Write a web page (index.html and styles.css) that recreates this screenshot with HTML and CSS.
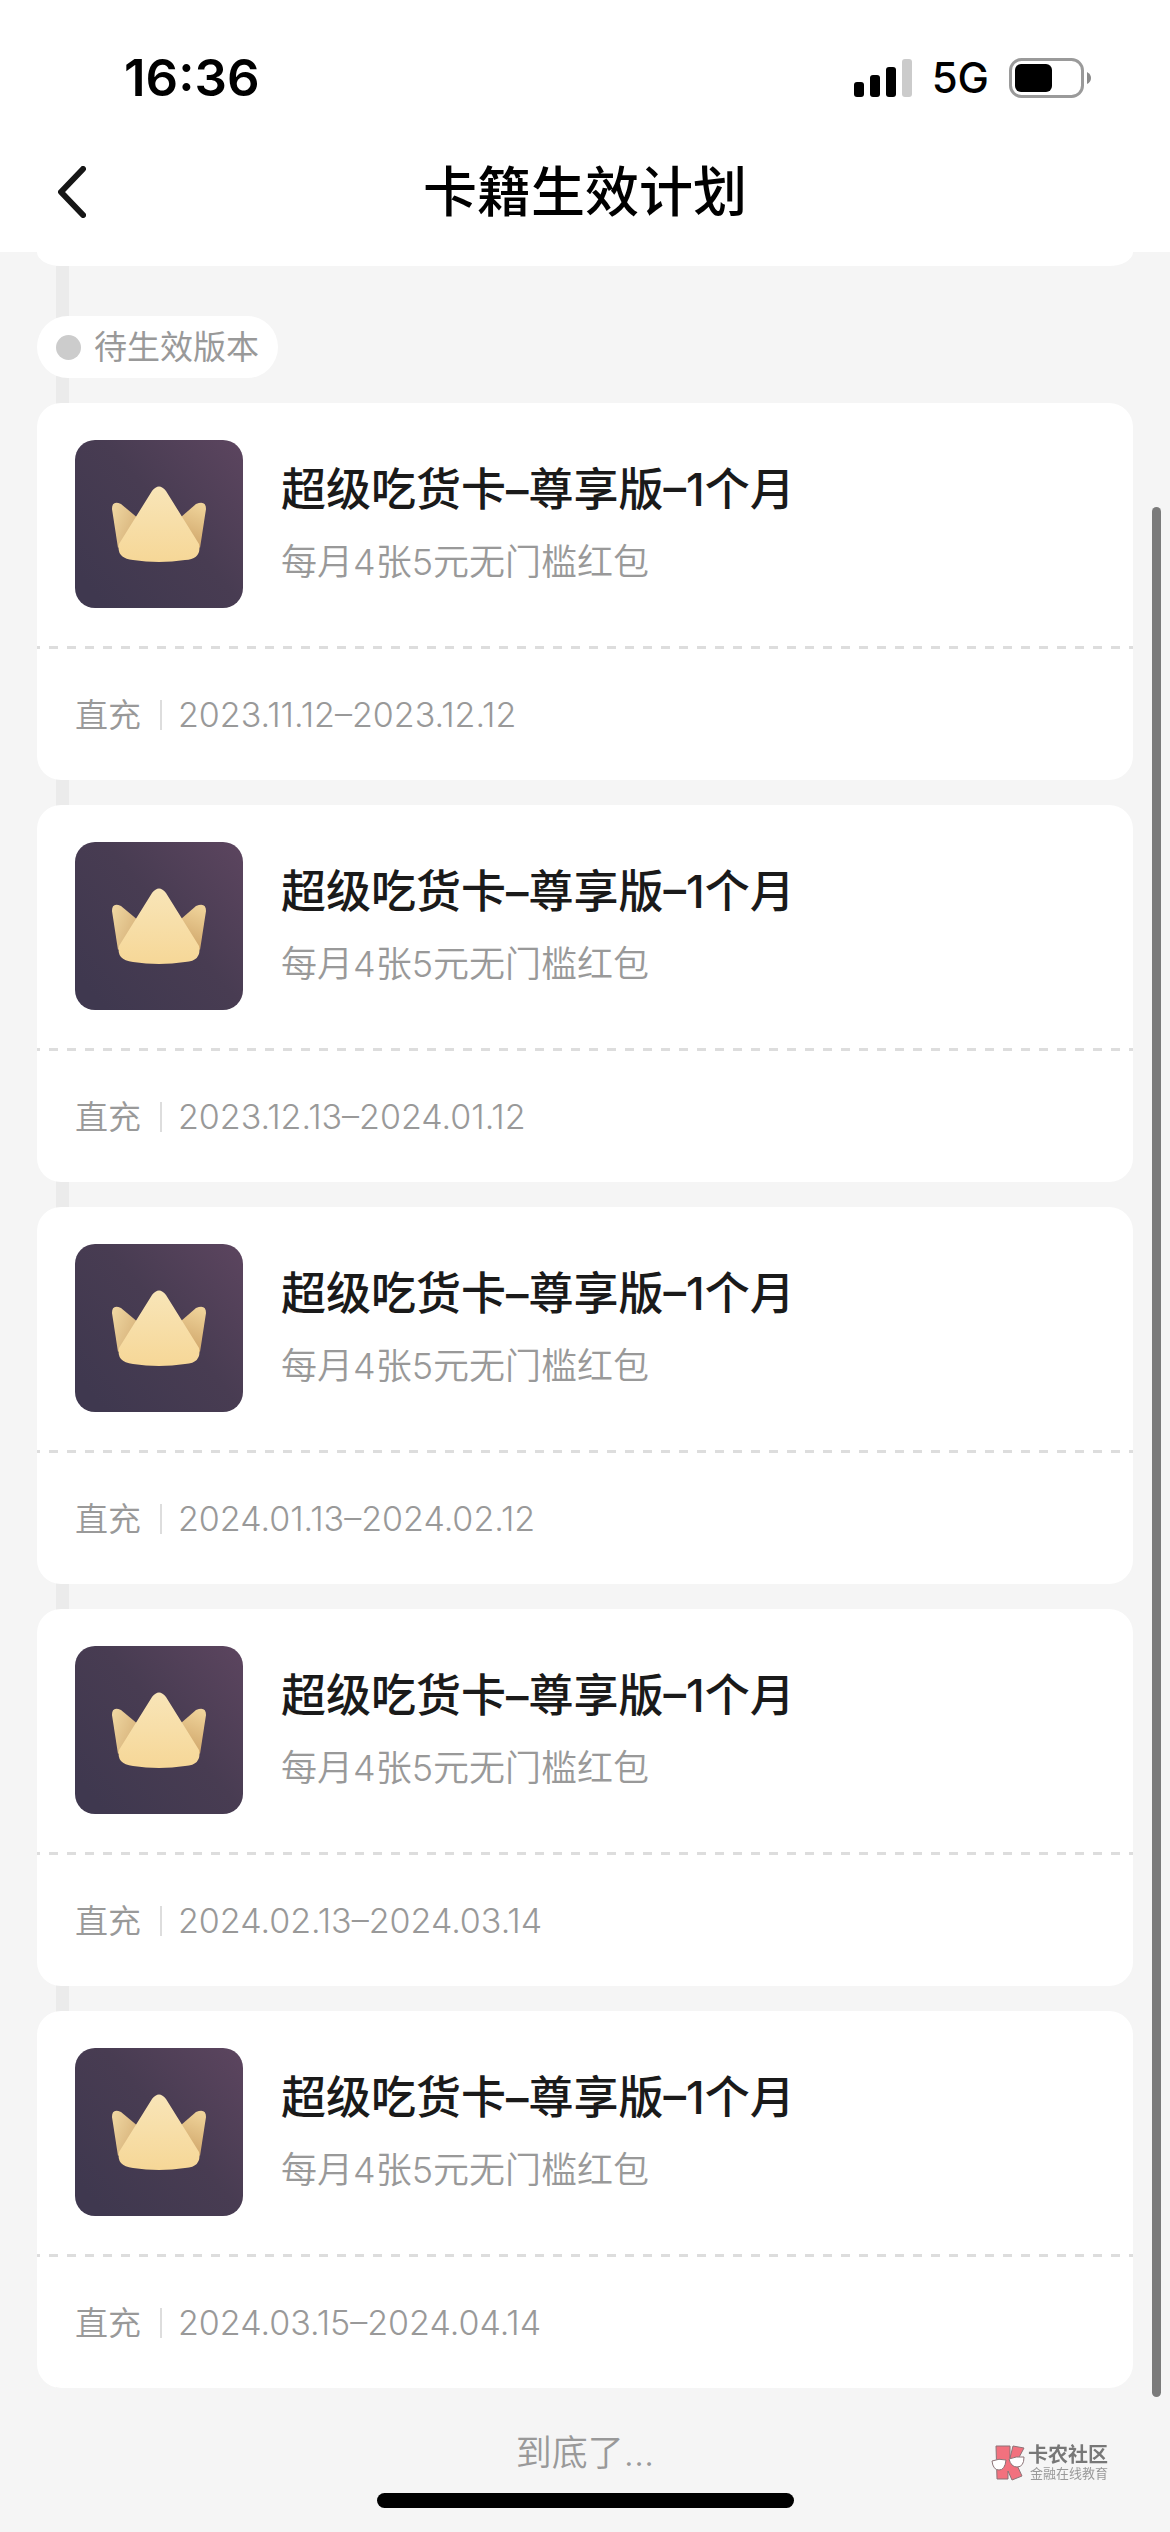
FILE: index.html
```html
<!DOCTYPE html>
<html lang="zh-CN">
<head>
<meta charset="utf-8">
<meta name="viewport" content="width=device-width, initial-scale=1">
<title>卡籍生效计划</title>
<link rel="stylesheet" href="styles.css">
</head>
<body>
<svg class="defs" width="0" height="0" aria-hidden="true">
  <defs>
    <linearGradient id="gold" x1="0" y1="0" x2="0" y2="1">
      <stop offset="0" stop-color="#f8e5b8"/>
      <stop offset="1" stop-color="#f6d797"/>
    </linearGradient>
    <linearGradient id="goldLeft" x1="0" y1="0" x2="1" y2="0.6">
      <stop offset="0" stop-color="#f1d9a4"/>
      <stop offset="1" stop-color="#d2ab72"/>
    </linearGradient>
    <linearGradient id="goldRight" x1="0.7" y1="0" x2="0.4" y2="1">
      <stop offset="0" stop-color="#efd39a"/>
      <stop offset="1" stop-color="#cda266"/>
    </linearGradient>
    <symbol id="crown" viewBox="0 0 168 168">
      <path d="M37 69 Q37 60 46 64 L70 84 L43 108 Z" fill="url(#goldLeft)"/>
      <path d="M131 69 Q131 60 121 64 L98 84 L125 108 Z" fill="url(#goldRight)"/>
      <path d="M77 51 Q84 42 91 51 L124 104 Q127 119 110 120 Q84 124 58 120 Q41 118 44 104 Z" fill="url(#gold)"/>
    </symbol>
  </defs>
</svg>

<header class="header">
  <div class="status">
    <span class="status-time">16:36</span>
    <div class="status-icons">
      <svg class="signal" viewBox="0 0 58 38" aria-hidden="true">
        <rect x="0" y="23" width="10" height="15" rx="3"/>
        <rect x="16" y="16" width="10" height="22" rx="3"/>
        <rect x="32" y="8" width="10" height="30" rx="3"/>
        <rect x="48" y="0" width="10" height="38" rx="3" fill="#cbcbcb"/>
      </svg>
      <span class="network">5G</span>
      <svg class="battery" viewBox="0 0 82 40" aria-hidden="true">
        <rect x="1.5" y="1.5" width="72" height="37" rx="11" fill="none" stroke="#9a9a9a" stroke-width="3"/>
        <rect x="6" y="6" width="37" height="28" rx="6"/>
        <path d="M78 14 Q82 16 82 20 Q82 24 78 26 Z" fill="#8a8a8a"/>
      </svg>
    </div>
  </div>
  <nav class="navbar">
    <button class="back" type="button" aria-label="返回">
      <svg viewBox="0 0 28 52" aria-hidden="true"><path d="M25 3 L3 26 L25 49" fill="none" stroke="#161616" stroke-width="6" stroke-linecap="round" stroke-linejoin="round"/></svg>
    </button>
    <h1 class="page-title">卡籍生效计划</h1>
  </nav>
</header>

<main class="content">
  <div class="card-edge"></div>
  <section class="timeline">
    <h2 class="pill"><span class="dot"></span>待生效版本</h2>
    <article class="card">
      <div class="card-main">
        <svg class="card-icon" aria-hidden="true"><use href="#crown"/></svg>
        <div class="card-text">
          <h3 class="card-title">超级吃货卡–尊享版–1个月</h3>
          <p class="card-desc">每月4张5元无门槛红包</p>
        </div>
      </div>
      <div class="card-foot"><span>直充</span><span class="bar"></span><span class="dates">2023.11.12–2023.12.12</span></div>
    </article>
    <article class="card">
      <div class="card-main">
        <svg class="card-icon" aria-hidden="true"><use href="#crown"/></svg>
        <div class="card-text">
          <h3 class="card-title">超级吃货卡–尊享版–1个月</h3>
          <p class="card-desc">每月4张5元无门槛红包</p>
        </div>
      </div>
      <div class="card-foot"><span>直充</span><span class="bar"></span><span class="dates">2023.12.13–2024.01.12</span></div>
    </article>
    <article class="card">
      <div class="card-main">
        <svg class="card-icon" aria-hidden="true"><use href="#crown"/></svg>
        <div class="card-text">
          <h3 class="card-title">超级吃货卡–尊享版–1个月</h3>
          <p class="card-desc">每月4张5元无门槛红包</p>
        </div>
      </div>
      <div class="card-foot"><span>直充</span><span class="bar"></span><span class="dates">2024.01.13–2024.02.12</span></div>
    </article>
    <article class="card">
      <div class="card-main">
        <svg class="card-icon" aria-hidden="true"><use href="#crown"/></svg>
        <div class="card-text">
          <h3 class="card-title">超级吃货卡–尊享版–1个月</h3>
          <p class="card-desc">每月4张5元无门槛红包</p>
        </div>
      </div>
      <div class="card-foot"><span>直充</span><span class="bar"></span><span class="dates">2024.02.13–2024.03.14</span></div>
    </article>
    <article class="card">
      <div class="card-main">
        <svg class="card-icon" aria-hidden="true"><use href="#crown"/></svg>
        <div class="card-text">
          <h3 class="card-title">超级吃货卡–尊享版–1个月</h3>
          <p class="card-desc">每月4张5元无门槛红包</p>
        </div>
      </div>
      <div class="card-foot"><span>直充</span><span class="bar"></span><span class="dates">2024.03.15–2024.04.14</span></div>
    </article>
  </section>
  <p class="end">到底了...</p>
</main>

<div class="scrollbar"></div>
<div class="home-indicator"></div>
<div class="watermark">
  <svg class="watermark-logo" viewBox="0 0 34 36" aria-hidden="true">
    <g stroke="#8b7377" stroke-width="1" stroke-linejoin="round">
      <path d="M5 1 H19 V13 L22 1 L33 3 L25 18 L31 31 L21 35 L17 26 V34 H6 Z" fill="#f2717e"/>
      <path d="M1 16 Q8 13 15 15 Q14 25 8 25 Q2 25 1 16 Z" fill="#fff"/>
      <path d="M18 14 Q25 11 33 12 Q33 22 26 22 Q20 22 18 14 Z" fill="#fff"/>
    </g>
  </svg>
  <div class="watermark-text">
    <span class="watermark-name">卡农社区</span>
    <span class="watermark-tag">金融在线教育</span>
  </div>
</div>
</body>
</html>
```
FILE: styles.css
```css
* {
  box-sizing: border-box;
}

body {
  margin: 0;
  min-height: 100vh;
  background: #f5f5f5;
  color: #1a1a1a;
  font-family: Inter, "Noto Sans CJK SC", sans-serif;
}

h1, h2, h3, p {
  margin: 0;
}

.defs {
  position: absolute;
}

/* Header */
.header {
  position: sticky;
  top: 0;
  z-index: 2;
  height: 252px;
  background: #fff;
}

.status {
  display: flex;
  justify-content: space-between;
  align-items: center;
  height: 132px;
  padding: 24px 79px 0 124px;
}

.status-time {
  color: #000;
  font-size: 51px;
  font-weight: 600;
  line-height: 60px;
}

.status-icons {
  display: flex;
  align-items: center;
  gap: 20px;
}

.signal {
  width: 58px;
  height: 38px;
}

.network {
  color: #000;
  font-size: 42px;
  font-weight: 500;
  line-height: 60px;
}

.battery {
  width: 82px;
  height: 40px;
}

.navbar {
  display: grid;
  grid-template-columns: 100px 1fr 100px;
  align-items: center;
  height: 120px;
  padding: 0 37px;
}

.back {
  display: flex;
  align-items: center;
  height: 80px;
  padding: 0 21px;
  border: 0;
  background: none;
}

.back svg {
  width: 28px;
  height: 52px;
}

.page-title {
  padding-top: 2px;
  color: #000;
  font-size: 54px;
  font-weight: 500;
  line-height: 80px;
  text-align: center;
}

/* Timeline */
.content {
  padding: 0 37px;
}

.card-edge {
  height: 14px;
  background: #fff;
  border-radius: 0 0 24px 24px / 0 0 14px 14px;
}

.timeline {
  display: flex;
  flex-direction: column;
  gap: 25px;
  padding-top: 50px;
  background: linear-gradient(#ebebeb, #ebebeb) 19px 0 / 13px 100% no-repeat;
}

.pill {
  display: flex;
  align-items: center;
  align-self: flex-start;
  gap: 13px;
  height: 62px;
  padding: 0 19px;
  border-radius: 31px;
  background: #fff;
  color: #999;
  font-size: 33px;
  font-weight: 400;
  line-height: 48px;
}

.dot {
  width: 25px;
  height: 25px;
  border-radius: 50%;
  background: #ccc;
}

.card {
  border-radius: 24px;
  background: #fff;
}

.card-main {
  display: flex;
  gap: 38px;
  padding: 37px 38px 41px;
  background: linear-gradient(90deg, #ddd 50%, transparent 50%) -6px 100% / 18px 3px repeat-x;
}

.card-icon {
  flex: none;
  width: 168px;
  height: 168px;
  border-radius: 20px;
  background: linear-gradient(50deg, #3f384f 10%, #483c52 55%, #5c455f 100%);
}

.card-text {
  display: flex;
  flex-direction: column;
  gap: 18px;
  padding-top: 20px;
}

.card-title {
  font-size: 45px;
  font-weight: 500;
  line-height: 60px;
  font-kerning: none;
}

.card-desc {
  color: #999;
  font-size: 36px;
  font-weight: 350;
  line-height: 48px;
}

.card-foot {
  display: flex;
  align-items: center;
  height: 131px;
  padding: 0 38px;
  color: #999;
  font-size: 33px;
  font-weight: 350;
  line-height: 48px;
}

.dates {
  font-size: 34px;
}

.bar {
  width: 2px;
  height: 30px;
  margin: 0 16px 0 19px;
  background: #ddd;
}

.end {
  padding: 41px 0 55px;
  color: #999;
  font-size: 36px;
  font-weight: 350;
  line-height: 48px;
  text-align: center;
}

/* Overlays */
.scrollbar {
  position: fixed;
  z-index: 3;
  top: 507px;
  right: 9px;
  bottom: 135px;
  width: 9px;
  border-radius: 5px;
  background: #7b7b7b;
}

.home-indicator {
  position: fixed;
  z-index: 3;
  bottom: 24px;
  left: 50%;
  width: 417px;
  height: 15px;
  margin-left: -208px;
  border-radius: 8px;
  background: #000;
}

.watermark {
  position: fixed;
  z-index: 3;
  right: 62px;
  bottom: 51px;
  display: flex;
  align-items: center;
  gap: 3px;
}

.watermark-logo {
  width: 34px;
  height: 36px;
}

.watermark-text {
  display: flex;
  flex-direction: column;
  align-items: flex-end;
}

.watermark-name {
  color: #777;
  font-size: 20px;
  font-weight: 700;
  line-height: 20px;
}

.watermark-tag {
  color: #999;
  font-size: 13px;
  line-height: 16px;
}
```
